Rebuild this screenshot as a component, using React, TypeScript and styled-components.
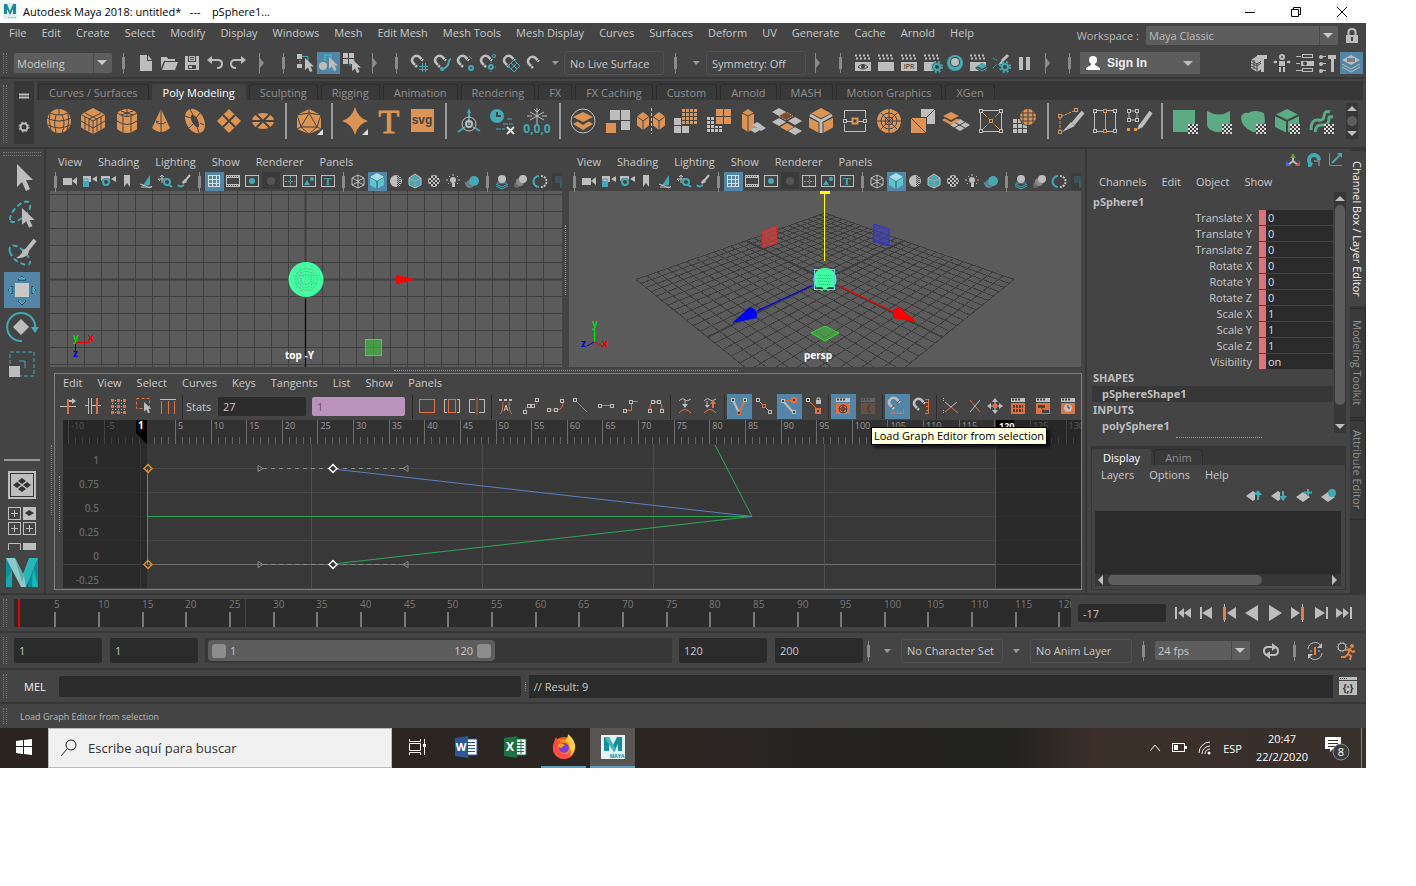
import React, { ReactNode } from "react";
import styled, { createGlobalStyle, css } from "styled-components";

const G = "#bdbdbd";
const T = "#43a9b5";
const O = "#dc9455";
const E = "#e0703f";
const N = "#5cab85";
const D = "#444444";
const SEL = "#5285a6";

const Global = createGlobalStyle`
  *, *::before, *::after { box-sizing: border-box; }
  body { margin: 0; background: #fff; font-family: "Open Sans", "Noto Sans", sans-serif; font-size: 11px; color: #c8c8c8; }
  button, input, select { font: inherit; color: inherit; margin: 0; padding: 0; border: 0; background: none; border-radius: 0; }
  button { cursor: default; }
`;

/* ---------- drawing helpers, all icons are drawn around (0,0) ---------- */
const s = (d: string, c: string = G, w: number = 1, dash?: string) => (
  <path d={d} fill="none" stroke={c} strokeWidth={w} strokeDasharray={dash} />
);
const f = (d: string, c: string = G) => <path d={d} fill={c} />;
const r = (x: number, y: number, w: number, h: number, c: string = G) => (
  <rect x={x} y={y} width={w} height={h} fill={c} />
);
const o = (x: number, y: number, rad: number, c: string = G) => <circle cx={x} cy={y} r={rad} fill={c} />;
const ring = (x: number, y: number, rad: number, c: string = G, w: number = 1, dash?: string) => (
  <circle cx={x} cy={y} r={rad} fill="none" stroke={c} strokeWidth={w} strokeDasharray={dash} />
);
const sq = (x: number, y: number, c: string = G) => (
  <rect x={x - 1.5} y={y - 1.5} width={3} height={3} fill={D} stroke={c} />
);
const at = (x: number, y: number, n: ReactNode, k: number = 1) => <g transform={`translate(${x} ${y}) scale(${k})`}>{n}</g>;

const magnet = s("M-2 4L-6 0A4.5 4.5 0 0 1 0-6.500L4-2.500", G, 2.5);
const magnetCut = <>{magnet}{s("M-5 3.500L-2 .5M1-2L4-5", D, 1)}</>;
const cursor = f("M0 0V12L3 9.500L5 14L7.500 13L5.500 8.500H9Z");
const clap = <>{r(-8, -1, 16, 9)}{s("M-8-7.500H8M-7-4.500H8", G, 2, "2 2")}</>;
const gear = (x: number, y: number, c: string) => <>{ring(x, y, 3, c, 2)}{ring(x, y, 5, c, 2, "2 2")}</>;
const checker = (
  <>{r(3, 3, 9, 9, "#444")}{[0, 1, 2, 3, 4].map((i) => [0, 1, 2, 3, 4].map((j) => (i + j) % 2 === 0 && <rect key={`${i}${j}`} x={3 + i * 2} y={3 + j * 2} width={2} height={2} fill="#d8d8d8" />))}</>
);
const grid = (x: number, y: number, n: number, p: number, c: string) =>
  Array.from({ length: n * n }, (_, i) => (
    <rect key={i} x={x + (i % n) * p} y={y + Math.floor(i / n) * p} width={p - 1} height={p - 1} fill={c} />
  ));
const tile = (x: number, y: number, c: string, w: number = 7, h: number = 4) => f(`M${x - w} ${y}L${x} ${y - h}L${x + w} ${y}L${x} ${y + h}Z`, c);
const cube = (w: number, h: number, c: string, line: string = D) => (
  <>
    {f(`M0 ${-h}L${w} ${-h / 2}V${h / 2}L0 ${h}L${-w} ${h / 2}V${-h / 2}Z`, c)}
    {s(`M${-w} ${-h / 2}L0 0L${w} ${-h / 2}M0 0V${h}`, line, 1)}
  </>
);
const wireCube = <>{s("M0-6L6-3V4L0 7L-6 4V-3ZM-6-3L0 0L6-3M0 0V7M0-6V1L-6 4M0 1L6 4", G)}</>;
const frame = <rect x={-6.5} y={-5.500} width={13} height={11} fill="none" stroke={G} />;
const windowIcon = (n: ReactNode) => <>{r(-7, -8, 14, 4)}{s("M-6-6.500H2", D, 2, "2 1")}{r(-7, -3, 14, 11, E)}{n}</>;

const I: Record<string, ReactNode> = {
  new: <>{f("M-6-8H1V-2H6V8H-6Z")}{f("M2-8L6-3H2Z")}</>,
  open: <>{f("M-8-6H-2L-1-4H6V-2H-5L-8 5Z")}{f("M-4-1H9L6 7H-7Z")}</>,
  save: <>{f("M-7-7H7V7H-7Z")}{r(-4, -7, 8, 6, D)}{r(-3, -7, 6, 5)}{s("M-2-5.500H2M-2-3.500H2", D)}{r(-4, 2, 8, 4, D)}{r(-3, 3, 3, 2)}</>,
  undo: <>{s("M-5-3H3Q7-3 7 1Q7 5 2 5", G, 2)}{f("M-8-3L-3-7V1Z")}</>,
  redo: <>{s("M5-3H-3Q-7-3-7 1Q-7 5-2 5", G, 2)}{f("M8-3L3-7V1Z")}</>,
  selHier: <>{r(-8, -9, 5, 5)}{r(-8, 1, 5, 4)}{s("M-3-6.500H3V-1", T)}{s("M-5-3V1", G, 1, "1 1")}{at(0, -5, cursor)}</>,
  selObj: <>{o(-5, 3, 4)}{s("M-3-2V-8H3V2", T, 2)}{at(1, -6, cursor)}</>,
  selComp: <>{grid(-8, -10, 2, 6, G)}{s("M-1 0V3M4-3H1", T)}{at(1, -4, cursor)}</>,
  magGrid: <>{magnetCut}{s("M0 3.500H9M0 6.500H9M3.500 0V9M6.500 0V9", T, 1)}</>,
  magCurve: <>{magnetCut}{s("M0 6Q6 5 7-2Q8-4 9-4", T, 2)}{o(0, 6, 2, T)}</>,
  magPoint: <>{magnetCut}{ring(6, 5, 2, T, 2)}{s("M4-7L7-4", T)}</>,
  magCenter: <>{magnetCut}{ring(6, -7, 1.500, T)}{ring(3, 4, 2, T, 2)}{s("M3-1V0M3 8V9M-2 4H-1M7 4H8", T, 1)}</>,
  magPlane: <>{magnetCut}{s("M-3 3L3-3L9 3L3 9ZM0 0L6 6M6 0L0 6", T, 1)}</>,
  mag: <>{at(1, 1, magnetCut)}</>,
  down: f("M-3-2H4L0 2Z", "#9a9a9a"),
  rEye: <>{clap}{s("M-5 4Q0-1 5 4Q0 8-5 4", D)}{o(0, 3.500, 2, D)}</>,
  rClap: clap,
  rIpr: <>{clap}<text x={0} y={6} fontSize={7} textAnchor="middle" fill="#222">IPR</text></>,
  rGear: <>{clap}{o(5, 4, 5, D)}{gear(5, 4, T)}</>,
  rBall: <>{o(0, 0, 8, T)}{o(0, -1, 5, D)}{o(0, -1, 4)}</>,
  rLayer: <>{clap}{tile(4, 5, D, 7, 5)}{tile(4, 3, T, 5, 3)}{s("M-1 5L4 8L9 5", T, 1)}</>,
  rPaint: <>{s("M-8-5L-3-2M-8 5L-4 1", T, 1, "2 1")}{s("M7-8L1-2", G, 3)}{f("M1-3L3 0L-3 2Z")}{gear(4, 4, T)}</>,
  pause: <>{r(-5, -6, 4, 13)}{r(2, -6, 4, 13)}</>,
  pModel: <>{at(-2, 1, cube(6, 8, G))}{s("M-8 0L-2 3L2 0M-8 3L-2 6M-5-3V6", D)}{f("M-2-8H8V-4H5V9H2V-4H-2Z")}</>,
  pHuman: <>{ring(0, -6, 2, G, 2)}{r(-3, -2, 6, 5)}{s("M-8-1H-5M5-1H8M-2 4V9M2 4V9", G, 2)}{ring(-7, -1, 1)}{ring(7, -1, 1)}</>,
  pAttr: <>{s("M-9-6.500H-4M-9 .5H-5M-9 7.500H-2")}<rect x={-2.500} y={-8.500} width={10} height={3} fill="none" stroke={G} />{r(-4, -2, 13, 5)}{o(0, .5, 2, D)}<rect x={-2.500} y={5.500} width={10} height={3} fill="none" stroke={G} /></>,
  pTool: <>{s("M-8-6.500H-2M-8 .5H-2M-8 7.500H-2", G, 1)}{o(-7, -6, 2)}{o(-7, 1, 2)}{o(-7, 8, 2)}{f("M0-8H8V-4H6V9H3V-4H0Z")}</>,
  pLayers: <>{tile(0, -3, G, 9, 5)}{s("M-9 1L0 6L9 1M-9 4L0 9L9 4", G, 1)}{s("M-4-4H4M-4-2H4", "#345")}</>,
  /* shelf */
  sphere: <>{o(0, 0, 12, O)}{s("M-12-3Q0 3 12-3M-11 4Q0 10 11 4M-9-8Q0-4 9-8M0-12V-6M-3-6Q-6 2-3 12M3-6Q7 2 3 12M-9-8Q-11 0-8 9M9-8Q11 0 8 9", D)}</>,
  cube: <>{cube(12, 13, O)}{s("M-12 0L0 7L12 0M-8-8L4-2V10M8-8L-4-2V10M-8-4V8M8-4V8", D)}</>,
  cylinder: <>{f("M-10-8Q0-16 10-8V8Q0 16-10 8Z", O)}{s("M-10-8Q0-1 10-8M-10 0Q0 7 10 0M-4-5V11M4-5V11M0-12V-5M-6-10L6-6M6-10L-6-6", D)}</>,
  cone: <>{f("M0-12L9 7Q0 15-9 7Z", O)}{s("M0-12V12M-5 1Q0 5 5 1M-5 0L-2 1", D)}</>,
  torus: <><ellipse cx={0} cy={0} rx={6} ry={10} fill="none" stroke={O} strokeWidth={6} transform="rotate(-28)" />{s("M-10-5L-4-3M-5-12L-2-6M5-8L1-3M9 4L5 2M4 12L2 6M-6 7L-1 2", D)}</>,
  plane: <>{f("M0-12L12 0L0 12L-12 0Z", O)}{s("M-6-6L6 6M6-6L-6 6", D, 2)}</>,
  disc: <><ellipse cx={0} cy={0} rx={11} ry={8} fill={O} />{s("M-11 0H11M-7-7L7 7M7-7L-7 7", D, 2)}</>,
  platonic: <>{f("M0-12L12-6V8L0 13L-12 8V-6Z", O)}{s("M0-8L-8 6H8ZM0-12V-8M-12-6L0-8L12-6M-12-6L-8 6L-12 8M12-6L8 6L12 8M-8 6L0 13L8 6", D)}{f("M14 8V14H8Z", "#ddd")}</>,
  star: <>{f("M0-14Q3-3 13 0Q3 3 0 14Q-3 3-13 0Q-3-3 0-14Z", O)}{f("M13 8V14H7Z", "#ddd")}</>,
  type: <text x={0} y={12} fontSize={34} fontFamily="Liberation Serif, serif" textAnchor="middle" fill={O} stroke={O}>T</text>,
  svg: <>{r(-12, -12, 23, 23, O)}<text x={-1} y={3} fontSize={12} fontFamily="Liberation Sans, sans-serif" fontWeight={700} textAnchor="middle" fill={D}>svg</text></>,
  center: <>{s("M0-11V4M-11 11L-4 6M4 6L11 10", T, 2)}{ring(0, 3, 7)}{ring(0, 3, 3, G, 2)}{f("M-2-8L0-13L2-8Z", T)}</>,
  history: <>{o(-6, -5, 7, T)}{s("M-6-9V-5H-2", D, 2)}{s("M4-2H10M0 3H10M-7 8H2", T, 1, "5 1")}{s("M4 6L11 13M11 6L4 13", "#ddd", 2)}</>,
  freeze: <>{s("M0-13V3M-7-9L7-1M7-9L-7-1M-3-12L0-9L3-12M-10-5H-5M5-5H10", G, 1)}<text x={0} y={12} fontSize={12} fontWeight={700} textAnchor="middle" fill={T}>0,0,0</text></>,
  combine: <>{ring(0, 0, 12)}{tile(0, 3, O, 10, 6)}{tile(0, -3, D, 11, 7)}{tile(0, -4, O, 10, 5)}</>,
  separate: <>{r(-7, -11, 10, 10)}{r(4, -11, 9, 10)}{r(4, 0, 9, 9)}{r(-11, 2, 10, 10, O)}</>,
  mirror: <>{at(-8, 0, cube(6, 9, O))}{at(8, 0, cube(6, 9, O))}{s("M.5-13V13", G, 1, "3 2")}</>,
  smooth: <>{grid(-11, -3, 2, 8, G)}{r(-4, -12, 17, 17, D)}{grid(-3, -12, 4, 4, O)}</>,
  reduce: <>{grid(-12, -4, 4, 4, G)}{r(-4, -12, 17, 17, D)}{grid(-3, -12, 2, 8, O)}</>,
  extrude: <>{f("M-11-8L-5-12L1-8V7L-5 11L-11 7Z", O)}{s("M-11-8L-5-5L1-8M-5-5V11", D)}{tile(4, 4, G, 5, 3)}{tile(8, 7, G, 5, 3)}{tile(2, 9, G, 5, 3)}</>,
  bridge: <>{tile(-8, -9, G)}{tile(-1, -5, "#6b4f38")}{s("M-8-5L-1-9L6-5L-1-1Z", O, 1, "2 1")}{tile(8, 0, G)}{tile(-8, 1, G)}{tile(0, 6, O)}{tile(8, 10, G)}</>,
  bevel: <>{cube(12, 13, O, "#444")}{s("M-12-6L0 0L12-6M0 0V13", D, 5)}{s("M-11-6L0 0L11-6M0 0V12", G, 3)}</>,
  connect: <>{s("M-10.500-3V-10.500H10.500V-3M-10.500 3V10.500H10.500V3M-10 .5H10", G)}{sq(-10, 0)}{sq(10, 0)}<rect x={-2.500} y={-2.500} width={5} height={5} fill={D} stroke={O} strokeWidth={2} /></>,
  wheel: <>{o(0, 0, 12, O)}{ring(0, 0, 8, D)}{ring(0, 0, 4, D)}{s("M0-12V12M-12 0H12M-8-8L8 8M8-8L-8 8", D)}</>,
  fill: <>{f("M-2-12H12V3H-2Z")}{r(-12, -4, 16, 16, D)}{r(-12, -3, 15, 15, O)}{s("M-12-3L3 12M3-3L12-12", D)}</>,
  merge: <>{tile(3, 4, G, 10, 6)}{s("M-3 1L8 7M8 1L-3 7", D)}{tile(-6, -1, O, 9, 5)}{tile(-6, -4, D, 9, 5)}{tile(-6, -5, O, 8, 4)}</>,
  target: <>{s("M-10.500-10.500H10.500V10.500H-10.500Z")}{s("M-9-9L9 9M9-9L-9 9", O, 1, "7 2")}{sq(-10, -10)}{sq(10, -10)}{sq(-10, 10)}{sq(10, 10)}{sq(0, 0, O)}</>,
  remesh: <>{grid(-12, -2, 3, 5, G)}{o(3, -4, 9, D)}{o(3, -4, 8, O)}{s("M3-12V4M-5-4H11M-2-11V3M8-11V3M-4-8H10M-4 0H10", D)}</>,
  cut: <>{s("M-11 11V-4L5-11", O, 1, "3 1")}{sq(-11, 11, O)}{sq(-11, -5, O)}{sq(5, -11, O)}{s("M12-9L2 3", G, 4)}{f("M0 1L4 5L-9 11Z")}</>,
  loop: <>{s("M-10.500-10.500H10.500M-10.500-10V10.500H10.500V-10", G, 1)}{s("M.5-10V10", O)}{sq(-10, -10)}{sq(10, -10)}{sq(-10, 10)}{sq(10, 10)}{sq(0, -10, O)}{sq(0, 10, O)}</>,
  quad: <>{s("M-10-10H-2V-1H-10Z")}{sq(-10, -10)}{sq(-2, -10)}{sq(-10, -1)}{sq(-2, -1)}{r(-12, 7, 3, 3, O)}{r(-5, 7, 3, 3, O)}{s("M12-9L2 5", G, 4)}{f("M0 3L4 6L-2 9Z")}</>,
  uv1: <>{r(-12, -11, 22, 22, N)}{checker}</>,
  uv2: <>{f("M-12-10Q0-3 11-10V8Q0 14-8 9Q-12 7-12 3Z", N)}{checker}</>,
  uv3: <>{f("M-12-4Q-10-9-5-8Q2-12 11-8L12 0Q10 12 0 11Q-12 6-12-4Z", N)}{checker}</>,
  uv4: <>{at(0, 0, cube(12, 12, N))}{s("M-12-6L0 0L12-6M0 0V12", D, 2)}{checker}</>,
  uv5: <>{s("M-10 9Q-10-2-3-1Q3 0 3-5Q4-11 9-9M-6 11Q-5 3 1 4Q8 5 8-3Q8-5 12-4", N, 3)}{checker}</>,
  /* viewport */
  vCam: <>{r(-7, -3, 9, 7)}{f("M2 0L7-4V4Z")}</>,
  vLock: <>{r(-6, -5, 8, 6)}{f("M3-2L8-5V1Z")}{r(-6, 0, 6, 6, T)}{s("M-5 0V-2H-1V0", T)}</>,
  vCamGear: <>{r(-7, -5, 9, 5)}{f("M3-2L8-5V1Z")}{o(-2, 2, 5, D)}{ring(-2, 1, 3, T, 2)}</>,
  vMark: f("M-3-6H3V6L0 2L-3 6Z"),
  vPlane: <>{f("M-2 3L4-6V4L-2 5Z", T)}{s("M-6 3L4 7L6 5M-5 6H6M-4 4H-2")}</>,
  vPan: <>{s("M-7-2H1M-3-6V2M-5-4L-3-6L-1-4M-5 0L-7-2")}{ring(2, 1, 3, T, 2)}{s("M4 4L7 6", T, 2)}</>,
  vPaint: <>{s("M6-6L1 0", G, 2)}{f("M1-2L3 1L-1 3L-2 1Z")}{s("M-6 4Q-4 7 0 4", T, 2)}</>,
  vGrid: <><rect x={-5.500} y={-5.500} width={11} height={11} fill="none" stroke="#ddd" />{s("M-1.500-5V5M2.500-5V5M-5-1.500H5M-5 2.500H5", "#ddd")}</>,
  vFilm: <>{r(-7, -6, 14, 12)}{r(-6, -3, 12, 6, D)}{s("M-6-4.500H6M-6 4.500H6", D, 1, "1 1")}</>,
  vRes: <>{frame}{o(0, 0, 3, T)}</>,
  vMask: <>{r(-9, -9, 18, 17, "#3b3b3b")}{o(0, 0, 4, "#555")}</>,
  vField: <>{frame}{s("M-5 .5H5M.5-5V5", T, 1, "2 1")}</>,
  vSafe: <>{frame}{o(3, -2, 2, T)}{f("M-5 4L-2-1L1 4Z", T)}</>,
  vT: <>{frame}<text x={0} y={4} fontSize={11} fontFamily="Liberation Serif, serif" fontWeight={700} textAnchor="middle" fill={T}>T</text></>,
  vWire: wireCube,
  vShade: <>{cube(7, 8, "#5fc3cf", "#2a5566")}{f("M-7-4L0-8L7-4L0 0Z", "#a5dfe6")}</>,
  vHalf: <>{o(0, 0, 6, G)}{s("M1.500-5V6M3.500-5V5", D, 1, "1 1")}{s("M2.500-4V6M4.500-3V4", D, 1, "1 1")}</>,
  vWireS: <>{cube(6, 7, T)}{s("M0-7L6-3V4L0 7L-6 4V-3ZM-6-3L0 0L6-3M0 0V7", G)}</>,
  vCheck: <>{o(0, 0, 6, G)}{s("M-5-4H5M-5 0H6M-5 4H5", D, 2, "2 2")}{s("M-3-2H6M-3 2H6", D, 2, "2 2")}</>,
  vLight: <>{o(0, -1, 3)}{r(-1, 2, 3, 4)}{s("M-7-1H-5M5-1H7M-4-5L-3-4M5-5L4-4M0-7V-5M-5 3L-4 2M5 3L4 2", G)}</>,
  vShadow: <>{o(-2, 3, 4, "#777")}{o(2, 0, 5, T)}{s("M-7 1Q-6 6-2 6", T)}</>,
  vAo: <>{s("M-6 3L0 6L6 3M-6 5L0 8L6 5M-5 2H5", T, 1)}{o(0, -2, 4)}</>,
  vBlur: <>{o(-4, 4, 3, "#666")}{o(-1, 1, 4, "#888")}{o(2, -2, 4)}</>,
  vAA: <>{s("M-1-5A5 5 0 0 0-1 6", T, 2)}{s("M1-5A5 5 0 0 1 1 6", G, 2, "2 1")}</>,
  vDim: <>{r(-7, -8, 18, 17, "#3d3d3d")}{r(-4, -5, 7, 7, "#41535a")}{r(1, 0, 9, 7, "#3d6068")}</>,
  /* graph editor */
  g1: <>{s("M-8 .5H8", G)}{s("M0-7V8", E, 2)}{f("M1-6H4V-8L8-5L4-2V-4H1Z")}</>,
  g2: <>{s("M-8-.5H8", G)}{s("M-3-8V8", D, 4)}{s("M-4.500-8V8M-1.500-8V8", G, 1)}{s("M4-8V8", E, 2)}</>,
  g3: <>{s("M-6-2.500H7M-6 3.500H7M-2.500-6V7M3.500-6V7", G, 1, "1 2")}{[-6, 0, 6].map((x) => [-6, 0, 6].map((y) => <rect key={`${x}${y}`} x={x - 1} y={y - 1} width={3} height={3} fill={E} />))}</>,
  g4: <><rect x={-6.500} y={-7.500} width={13} height={10} fill="none" stroke={E} strokeDasharray="3 2" />{at(1, -4, cursor, 0.8)}</>,
  g5: <>{s("M-8-6.500H8")}{s("M-6.500-5V8M.5-5V8M6.500-5V8", E, 1)}</>,
  g6: <rect x={-7.500} y={-6.500} width={15} height={13} fill="none" stroke={E} />,
  g7: <><rect x={-3.500} y={-6.500} width={7} height={13} fill="none" stroke={E} />{s("M-5-6.500H-7.500V6.500H-5M5-6.500H7.500V6.500H5")}</>,
  g8: <>{s("M-2-6.500H-7.500V6.500H-2M2-6.500H7.500V6.500H2")}{s("M0-9V9", "#8a5340", 2)}</>,
  g9: <>{s("M-6 8Q-3 6-3-4M6 8Q3 6 3-4", E)}{s("M-7-6H7", G, 2, "3 2")}{s("M-2 5L0-1L2 5M-1 3H1")}</>,
  g10: <>{s("M-6 6Q-6 0-2 0H2Q6 0 6-6", E, 1, "2 1")}{sq(-6, 6)}{sq(-2, 0)}{sq(2, 0)}{sq(6, -6)}</>,
  g11: <>{s("M-7 4H1Q7 4 7-5", E)}{sq(-7, 4)}{sq(0, 4)}{sq(6, -5)}</>,
  g12: <>{s("M-5-5L6 6", E)}{sq(-6, -6)}</>,
  g13: <>{s("M-6-.5H6", E)}{sq(-6, 0)}{sq(6, 0)}</>,
  g14: <>{s("M-6 4.500H.5V-4.500H7", E)}{sq(-6, 5)}{sq(0, -4)}</>,
  g15: <>{s("M-6 5Q-6-4-3-4M6 5Q6-4 3-4", E)}{s("M-3-4H3")}{sq(-6, 5)}{sq(-3, -4)}{sq(3, -4)}{sq(6, 5)}</>,
  g16: <>{s("M-6-5Q-2-9 0-6Q2-4 6-7")}{s("M-6 7Q0 0 6 7", E)}{f("M-3-2H3L0 2Z")}{s("M0-6V0")}</>,
  g17: <>{s("M-6-5Q-2-9 0-6Q2-4 6-7")}{s("M-6 7Q0 0 6 7", E)}{f("M-5-1H0L-3 2Z")}{s("M-3-5V0")}{f("M0-2H6L3-6Z", E)}{s("M3-3V2", E, 2)}</>,
  g18: <>{s("M-6-6L0 7", G, 2)}{s("M6-6L0 7", E, 2)}{sq(-6, -6)}{sq(6, -6)}{sq(0, 7, E)}</>,
  g19: <>{s("M-6-6L6 6", G)}{sq(-6, -6)}{sq(6, 6)}{sq(0, 0, E)}</>,
  g20: <>{s("M-6-5.500H4", E)}{s("M-6-5L4 6", G, 2)}{sq(-6, -5)}{sq(5, 6)}<rect x={3} y={-8} width={4} height={4} fill={D} stroke={E} strokeWidth={2} /></>,
  g21: <>{s("M-6-6L2 2", E)}{sq(-6, -6)}<rect x={2} y={3} width={4} height={4} fill={D} stroke={E} strokeWidth={2} />{r(2, -6, 5, 4)}{s("M3-6V-8H6V-6")}</>,
  g22: <>{windowIcon(<>{ring(0, 3, 4, D)}{ring(0, 3, 2, D)}{s("M0-1V7M-4 3H4", D)}</>)}</>,
  g23: <g opacity={0.25}>{windowIcon(s("M2-1Q-2 3 2 7", D, 2))}</g>,
  g24: <>{at(-1, -1, magnetCut)}{s("M-5 7.500H7M-5 8V4M-2.500 8V5M.5 8V5M3.500 8V5M6.500 8V3", E)}</>,
  g25: <>{at(-1, 0, magnetCut)}{s("M6.500-7V8M3-6.500H7M4-3.500H7M4 .5H7M4 4.500H7M3 7.500H7", E)}</>,
  g26: <>{s("M-6-4L0 1L6-4")}{s("M-6 6L0 1L7 7", E)}{s("M-7.500 4V8M-7.500-8V-4", G, 1, "1 1")}</>,
  g27: <>{s("M-4-6L6 6", E)}{s("M6-6L-4 6")}</>,
  g28: <>{f("M0-8L3-4H-3ZM0 8L3 4H-3ZM-8 0L-4-3V3ZM8 0L4-3V3Z")}{r(-2, -2, 4, 4, E)}{s("M0-4V-2M0 2V4M-4 0H-2M2 0H4")}</>,
  g29: <>{windowIcon(s("M-5 .5H5M-5 4.500H5", D, 3, "2 1"))}</>,
  g30: <>{windowIcon(<>{r(-5, -1, 7, 3, D)}{r(-1, 4, 7, 3, D)}{s("M-2 2L2 5", D)}</>)}</>,
  g31: <>{windowIcon(<>{o(0, 2, 4, G)}{s("M0-1V2H2", D)}</>)}</>,
  /* toolbox */
  tSel: <>{f("M-5-15V8L0 3L4 12L8 10L4 1H11Z")}</>,
  tLasso: <>{s("M-12 4Q-12-4-2-12Q6-17 8-12Q10-6 0 2Q-10 9-12 4Z", T, 2, "5 3")}{at(0, -8, cursor, 1.400)}</>,
  tPaint: <>{s("M-12-1Q-14-9-6-7Q2-4 7 5Q10 12 5 12Q-8 10-12-1Z", T, 2, "5 3")}{s("M13-13L5-3", G, 4)}{f("M5-5L7-1Q4 6-6 5Q0 2 1-3Z")}</>,
  tMove: <>{r(-7, -7, 14, 14, "#c8c8c8")}{s("M-4-10L0-14L4-10ZM-4 11L0 15L4 11ZM-10-4L-14 0L-10 4ZM10-4L14 0L10 4Z", "#163f49", 1)}{s("M-3-11L0-13L3-11ZM-3 11L0 14L3 11ZM-11-3L-13 0L-11 3ZM11-3L13 0L11 3Z", "#51c0cc", 1)}</>,
  tRot: <>{s("M0 14A14 14 0 1 1 13 2", T, 2)}{f("M9 0H17L13 6Z", T)}{f("M-1-8L7 0L-1 8L-9 0Z")}</>,
  tScale: <><rect x={-12} y={-12} width={24} height={24} fill="none" stroke={T} strokeDasharray="4 2" />{r(-13, 2, 11, 11)}{s("M-3-3H3V4", T)}</>,
  /* channel box */
  cTri: <>{s("M0 1L-5 5M0 1L5 5M0 1V-3", G, 2)}{f("M-3-2L0-7L3-2Z", "#5aa02c")}{f("M-7 6V1L-2 6Z", "#3a6ee0")}{f("M7 6V1L2 6Z", "#e04848")}</>,
  cSpeed: <>{ring(0, 0, 5, T, 4)}{f("M0 0H8V8H-3Z", D)}{s("M0 1H5V6", "#777", 2)}{r(-6, 4, 3, 3, T)}</>,
  cGraph: <>{s("M-5.500-7V5.500H7", "#888", 1)}{s("M-3 3L5-5", T, 2)}{f("M2-7H7V-2Z", T)}</>,
  lUp: <>{tile(-1, 0, G, 7, 5)}{r(1, -1, 4, 6, D)}{s("M4 4V-1", T, 2)}{f("M0-1L4-6L8-1Z", T)}</>,
  lDown: <>{tile(-1, 0, G, 7, 5)}{r(1, -3, 4, 6, D)}{s("M4-5V2", T, 2)}{f("M0 0L4 5L8 0Z", T)}</>,
  lNew: <>{tile(-1, 1, G, 7, 5)}{s("M4-7V0M0-3.500H8", T, 2)}</>,
  lAssign: <>{tile(-1, 1, G, 7, 5)}{o(3, -3, 4, T)}</>,
  /* transport */
  start: <>{r(-8, -6, 2, 12)}{f("M-5 0L1-5V5ZM1 0L8-5V5Z")}</>,
  stepB: <>{r(-6, -6, 2, 12)}{f("M-4 0L6-6V6Z")}</>,
  keyB: <>{r(-5, -9, 1, 18)}{r(-6, -6, 3, 13, "#dd8144")}{f("M-2 0L7-6V6Z")}</>,
  playB: f("M-7 0L6-8V8Z"),
  play: f("M7 0L-6-8V8Z"),
  keyF: <>{r(4, -9, 1, 18)}{r(3, -6, 3, 13, "#dd8144")}{f("M2 0L-7-6V6Z")}</>,
  stepF: <>{r(5, -6, 2, 12)}{f("M4 0L-6-6V6Z")}</>,
  end: <>{r(6, -6, 2, 12)}{f("M5 0L-1-5V5ZM-1 0L-8-5V5Z")}</>,
  repeat: <>{s("M-4-4H3Q7-4 7 0Q7 4 3 4M4 4H-3Q-7 4-7 0Q-7-4-3-4", G, 2)}{f("M1-8V0L6-4Z")}{f("M-1 0V8L-6 4Z")}</>,
  auto: <>{s("M-7-2A7 7 0 0 1 6-5M7 2A7 7 0 0 1-6 5", G, 1)}{f("M7-8V-3H2Z")}{f("M-7 8V3H-2Z")}{r(-1, -4, 2, 8, "#dd8144")}{s("M-5 0H-3M3 0H5")}</>,
  run: <>{ring(-4, -4, 4, G, 1)}{ring(-4, -4, 5, G, 1, "1 2")}{o(6, -5, 2, "#dd8144")}{s("M-1-1L4-2L2 3L5 5L4 9M2 3L-1 6H-5M4-1L7 1L9 0", "#dd8144", 2)}</>,
  script: <>{r(-9, -9, 18, 18)}{r(-9, -6, 18, 1, D)}{s("M-8-7.500H0", D, 1, "1 1")}<text x={0} y={6} fontSize={10} fontWeight={700} textAnchor="middle" fill="#333">{"{;}"}</text></>,
  panelMenu: <>{s("M-5-1.500H5M-5 1.500H5", G, 2)}</>,
  gear: <>{ring(0, 0, 3.5, G, 2)}{ring(0, 0, 5, G, 1, "2 2")}</>,
};

/* The drawing keeps the parity of its button, so that its centre falls on a whole pixel. */
const Svg = styled.svg<{ $w: number; $h: number }>`
  display: block;
  flex: none;
  width: ${(p) => p.$w}px;
  height: ${(p) => p.$h}px;
  overflow: visible;
`;
const Icon = ({ n, w, h, size = 16 }: { n: string; w: number; h: number; size?: number }) => {
  const sw = size + (w % 2);
  const sh = size + (h % 2);
  return <Svg $w={sw} $h={sh} viewBox={`${-size / 2} ${-size / 2} ${sw} ${sh}`} aria-hidden="true">{I[n]}</Svg>;
};

/* ---------- shared parts ---------- */
const Page = styled.div`
  padding-right: 50px;
`;
const Win = styled.div`
  background: #444;
  overflow: hidden;
`;
const Bar = styled.div<{ $h: number }>`
  display: flex;
  align-items: center;
  height: ${(p) => p.$h}px;
`;
const RuledBar = styled(Bar)`
  box-sizing: content-box;
  border-bottom: 2px solid #373737;
`;
const Grip = styled.div`
  flex: none;
  align-self: stretch;
  width: 4px;
  margin: 4px 7px 4px 3px;
  border: 1px dotted #7a7a7a;
  border-width: 0 1px;
`;
const ToolBtn = styled.button<{ $w: number; $h: number; $on?: boolean }>`
  flex: none;
  display: flex;
  align-items: center;
  justify-content: center;
  width: ${(p) => p.$w}px;
  height: ${(p) => p.$h}px;
  background: ${(p) => (p.$on ? SEL : "transparent")};
`;
const SepBox = styled.span<{ $w: number }>`
  flex: none;
  display: flex;
  align-items: center;
  justify-content: center;
  width: ${(p) => p.$w}px;
`;
const Sep = ({ w, kind = "knob" }: { w: number; kind?: "knob" | "arrow" | "line" | "tall" }) => (
  <SepBox $w={w}>
    {kind === "tall" ? (
      <svg width={2} height={36}><rect width={2} height={36} fill="#9a9a9a" /></svg>
    ) : kind === "line" ? (
      <svg width={2} height={24}><rect width={1} height={24} fill="#2b2b2b" /></svg>
    ) : (
      <svg width={5} height={20}>
        <rect x={kind === "arrow" ? 0 : 2} width={1} height={20} fill="#8a8a8a" />
        {kind === "arrow" ? <path d="M1 5L5 10L1 15Z" fill="#8a8a8a" /> : <rect x={1} y={4} width={3} height={12} fill="#8a8a8a" />}
      </svg>
    )}
  </SepBox>
);
const Tools = ({ names, w, h, on = [], size = 16 }: { names: string[]; w: number; h: number; on?: string[]; size?: number }) => (
  <>
    {names.map((n) => (
      <ToolBtn key={n} $w={w} $h={h} $on={on.includes(n)} aria-label={n}>
        <Icon n={n} w={w} h={h} size={size} />
      </ToolBtn>
    ))}
  </>
);
const ListArrow = ({ w, label }: { w: number; label: string }) => (
  <ToolBtn $w={w} $h={22} aria-label={label}><Icon n="down" w={w} h={22} /></ToolBtn>
);
const MenuNav = styled.nav<{ $gap: number; $pl: number; $h: number }>`
  display: flex;
  align-items: center;
  gap: ${(p) => p.$gap}px;
  height: ${(p) => p.$h}px;
  padding-left: ${(p) => p.$pl}px;
`;
const MenuBtn = styled.button`
  white-space: nowrap;
  line-height: 20px;
`;
const Menu = ({ items, h = 20, gap = 15, pl = 8 }: { items: string; h?: number; gap?: number; pl?: number }) => (
  <MenuNav $gap={gap} $pl={pl} $h={h}>
    {items.split("|").map((m) => <MenuBtn key={m}>{m}</MenuBtn>)}
  </MenuNav>
);
const SelectWrap = styled.label<{ $w: number; $h: number }>`
  position: relative;
  flex: none;
  display: block;
  width: ${(p) => p.$w}px;
  height: ${(p) => p.$h}px;
  background: #5d5d5d;
  border-radius: 2px;
  &::before { content: ""; position: absolute; right: 18px; top: 0; bottom: 0; width: 1px; background: #494949; }
  &::after { content: ""; position: absolute; right: 5px; top: 7px; border: 5px solid transparent; border-top-color: #c8c8c8; border-bottom: 0; }
`;
const Select = styled.select`
  width: 100%;
  height: 100%;
  padding-left: 3px;
  appearance: none;
  outline: 0;
`;
const Drop = ({ w, h, value, label }: { w: number; h: number; value: string; label: string }) => (
  <SelectWrap $w={w} $h={h}>
    <Select aria-label={label} defaultValue={value}><option>{value}</option></Select>
  </SelectWrap>
);
const Outline = styled.button<{ $w: number }>`
  flex: none;
  width: ${(p) => p.$w}px;
  height: 24px;
  padding-left: 5px;
  text-align: left;
  border: 1px solid #525252;
  border-radius: 3px;
`;
const Field = styled.input<{ $w?: number; $h: number; $bg?: string; $fg?: string }>`
  flex: none;
  width: ${(p) => (p.$w ? `${p.$w}px` : "auto")};
  min-width: 0;
  height: ${(p) => p.$h}px;
  padding-left: 5px;
  border-radius: 2px;
  background: ${(p) => p.$bg ?? "#2b2b2b"};
  color: ${(p) => p.$fg ?? "#c8c8c8"};
`;

/* ---------- title bar ---------- */
const TitleBar = styled.header`
  display: flex;
  align-items: center;
  height: 23px;
  background: #fff;
  color: #000;
`;
const Title = styled.h1`
  flex: 1;
  margin: 0;
  padding-left: 5px;
  font-size: 11px;
  font-weight: 400;
  white-space: pre;
`;

const TopBar = styled.div`
  display: flex;
  align-items: flex-start;
  height: 26px;
`;
const Workspace = styled.div`
  display: flex;
  align-items: center;
  gap: 7px;
  margin: 3px 7px 0 auto;
  color: #bbb;
`;
const SignIn = styled.button`
  flex: none;
  display: flex;
  align-items: center;
  gap: 6px;
  width: 120px;
  height: 22px;
  padding: 0 4px 0 5px;
  background: #5d5d5d;
  color: #eee;
  font: 700 12px "Liberation Sans", sans-serif;
`;
const Push = styled.span`
  display: flex;
  margin-left: auto;
  padding-right: 3px;
`;

/* ---------- shelf ---------- */
const Shelf = styled.div`
  display: flex;
  height: 70px;
  padding: 2px 3px 0 0;
  border-bottom: 2px solid #373737;
`;
const ShelfSide = styled.div`
  display: flex;
  flex-direction: column;
  align-items: center;
  justify-content: space-between;
  width: 20px;
  height: 63px;
  margin-right: 3px;
  padding: 5px 0 7px;
  background: #373737;
`;
const ShelfMain = styled.div`
  flex: 1;
  min-width: 0;
  overflow: hidden;
`;
const ShelfTabs = styled.div`
  display: flex;
  gap: 3px;
  height: 19px;
  padding: 3px 0 0 1px;
  background: #373737;
`;
const Tab = styled.button<{ $on?: boolean }>`
  flex: none;
  height: 16px;
  padding: 0 10px;
  line-height: 14px;
  white-space: nowrap;
  border: 1px solid ${(p) => (p.$on ? D : "#2c2c2c")};
  border-bottom: 0;
  border-radius: 3px 3px 0 0;
  background: ${(p) => (p.$on ? D : "#393939")};
  color: ${(p) => (p.$on ? "#fff" : "#8f8f8f")};
`;
const ShelfRow = styled.div`
  display: flex;
  align-items: center;
  height: 42px;
  padding-left: 5px;
`;
const ShelfScroll = styled.div`
  display: flex;
  width: 12px;
  height: 36px;
  margin: 0 5px 0 auto;
  background: #373737;
`;

/* ---------- middle ---------- */
const Middle = styled.main`
  display: flex;
  box-sizing: content-box;
  height: 444px;
  border-bottom: 2px solid #373737;
`;
const Toolbox = styled.aside`
  display: flex;
  flex-direction: column;
  align-items: center;
  gap: 1px;
  width: 46px;
  padding-top: 3px;
  border-right: 2px solid #373737;
`;
const ToolGrip = styled.div`
  width: 38px;
  height: 4px;
  margin-bottom: 4px;
  border: 1px dotted #7a7a7a;
  border-width: 1px 0;
`;
const ToolFoot = styled.div`
  display: flex;
  flex-direction: column;
  align-items: center;
  gap: 8px;
  width: 36px;
  margin-top: auto;
  padding: 10px 0 5px;
  border-top: 2px solid #999;
`;
const Center = styled.section`
  flex: 1;
  min-width: 0;
  display: flex;
  flex-direction: column;
  padding: 3px 4px 3px 4px;
`;
const Views = styled.div`
  display: flex;
`;
const VSplit = styled.div`
  display: flex;
  align-items: center;
  justify-content: center;
  width: 7px;
  &::after { content: ""; height: 70px; border-left: 1px dotted #999; }
`;
const HSplit = styled.div<{ $w: number; $h: number }>`
  display: flex;
  align-items: center;
  justify-content: center;
  height: ${(p) => p.$h}px;
  &::after { content: ""; width: ${(p) => p.$w}px; border-top: 1px dotted #999; }
`;
const View = styled.div`
  flex: 1;
  min-width: 0;
  overflow: hidden;
`;
const Canvas = styled.svg`
  display: block;
  width: 100%;
  height: 176px;
  background: #5b5b5b;
`;

const axisText = { fontSize: 10, fontWeight: 700, fontFamily: "Noto Sans, sans-serif" };

const Viewport = ({ children }: { children: ReactNode }) => (
  <View>
    <Menu items="View|Shading|Lighting|Show|Renderer|Panels" gap={16} />
    <Bar $h={19}>
      <Sep w={11} />
      <Tools w={19} h={19} names={["vCam", "vLock", "vCamGear", "vMark", "vPlane", "vPan", "vPaint"]} />
      <Sep w={11} />
      <Tools w={19} h={19} on={["vGrid"]} names={["vGrid", "vFilm", "vRes", "vMask", "vField", "vSafe", "vT"]} />
      <Sep w={11} />
      <Tools w={19} h={19} on={["vShade"]} names={["vWire", "vShade", "vHalf", "vWireS", "vCheck", "vLight", "vShadow"]} />
      <Sep w={11} />
      <Tools w={19} h={19} names={["vAo", "vBlur", "vAA", "vDim"]} />
    </Bar>
    <Canvas viewBox="0 0 512 176" preserveAspectRatio="xMidYMid slice">{children}</Canvas>
  </View>
);

const TopView = () => (
  <>
    {Array.from({ length: 29 }, (_, i) => <path key={i} d={`M${17.5 + 17 * i} 0V176`} stroke="#3f3f3f" strokeWidth={i === 14 ? 2 : 1} />)}
    {Array.from({ length: 11 }, (_, i) => <path key={i} d={`M0 ${3.500 + 17 * i}H512`} stroke="#3f3f3f" strokeWidth={i === 5 ? 2 : 1} />)}
    <circle cx={256} cy={88.5} r={17.5} fill="#3fffa0" />
    {[5, 8, 11].map((q) => <circle key={q} cx={256} cy={88.5} r={q} fill="none" stroke="#6f9a8a" strokeDasharray="1 1" />)}
    {s("M244 77L268 100M268 77L244 100M243 84.500H269M243 92.500H269M250.500 75V102M261.500 75V102", "#6fb3a0", 1, "1 2")}
    {s("M276 88.500H346", "#e00000")}
    {f("M346 84L366 88.500L346 93Z", "#f00")}
    {s("M255.500 108V176", "#00007a")}
    <rect x={315.500} y={148.500} width={16} height={16} fill="rgba(60,200,60,.6)" stroke="#2fe02f" />
    {s("M25.500 151.500H40", "#e00")}
    {s("M25.500 151V160", "#00c")}
    <text x={23} y={150} fill="#0d0" {...axisText}>y</text>
    <text x={38} y={150} fill="#e00" {...axisText}>x</text>
    <text x={23} y={166} fill="#00d" {...axisText}>z</text>
    <text x={235} y={168} fill="#fff" {...axisText}>top -Y</text>
  </>
);

const project = (a: number, b: number) => {
  const u = a - b, v = a + b, w = 1 - 0.196 * v;
  return `${(256 + (94.5 * u) / w).toFixed(1)} ${(88.5 + (46.300 * v) / w).toFixed(1)}`;
};
const PerspView = () => (
  <>
    {Array.from({ length: 25 }, (_, i) => {
      const t = (i - 12) / 12;
      return <path key={i} d={`M${project(t, -1)}L${project(t, 1)}M${project(-1, t)}L${project(1, t)}`} stroke="#3f3f3f" strokeWidth={i === 12 ? 2 : 1} shapeRendering="crispEdges" />;
    })}
    <path d="M193 41L207 35L208 52L194 56Z" fill="rgba(230,60,60,.6)" stroke="#e02828" />
    <path d="M305 33L320 38V55L304 50Z" fill="rgba(60,60,190,.6)" stroke="#3030dd" />
    {s("M255.500 2V70", "#ff0")}{r(251, 0, 10, 3, "#ff0")}
    {s("M242 95L188 120", "#00e", 1.2)}{f("M163 132L181 116Q189 118 188 127Z", "#00f")}
    {s("M270 95L325 121", "#f00", 1.2)}{f("M348 131L324 127Q323 116 330 116Z", "#f00")}
    <circle cx={256} cy={88.500} r={11.500} fill="#3fffa0" />
    {s("M249 84.500H263M248 87.500H264M249 90.500H263M250 93.500H262", "#7aa08f", 1, "1 1")}
    {s("M248 97H252L256 100L260 97H264", "#224a38", 2)}
    <rect x={245.500} y={78.500} width={20} height={20} fill="none" stroke="#63c8f0" />
    <path d="M242 142L256 135L270 142L256 150Z" fill="rgba(70,190,70,.6)" stroke="#2fe02f" />
    {s("M25.500 137V151", "#0e0")}{s("M25 151L18 155", "#00d")}{s("M25 151L33 155", "#e00")}
    <text x={23} y={136} fill="#0d0" {...axisText}>y</text>
    <text x={12} y={156} fill="#00d" {...axisText}>z</text>
    <text x={33} y={156} fill="#e00" {...axisText}>x</text>
    <text x={235} y={168} fill="#fff" {...axisText}>persp</text>
  </>
);

/* ---------- graph editor ---------- */
const Editor = styled.div`
  position: relative;
  margin-left: 4px;
  margin-right: -1px;
  border: 1px solid #7e7e7e;
  padding-bottom: 1px;
`;
const EditorGrip = styled.div<{ $out?: boolean }>`
  position: absolute;
  left: ${(p) => (p.$out ? -4 : 4)}px;
  top: ${(p) => (p.$out ? 71 : 102)}px;
  height: ${(p) => (p.$out ? 70 : 56)}px;
  border-left: 1px dotted #888;
`;
const EditorTools = styled(Bar)`
  padding: 1px 0 0 1px;
`;
const Stats = styled.label`
  display: flex;
  align-items: center;
  justify-content: space-between;
  width: 122px;
  padding-left: 1px;
`;
const Pink = styled.span`
  display: flex;
  margin: 0 6px;
`;
const Graph = styled.div`
  margin-left: 8px;
  height: 168px;
  overflow: hidden;
  background: #383838;
`;
const Tip = styled.div`
  position: absolute;
  left: 816px;
  top: 53px;
  height: 18px;
  padding: 0 2px;
  border: 1px solid #000;
  background: #ffffe1;
  color: #000;
  line-height: 16px;
  white-space: nowrap;
  box-shadow: 3px 3px 3px rgba(0, 0, 0, 0.6);
`;

const gx = (frameNo: number) => 77.3 + 7.125 * frameNo;
const GraphChart = () => (
  <svg width={1018} height={168} display="block">
    {[48, 72, 96, 120, 168].map((y) => <path key={y} d={`M0 ${y}.5H1018`} stroke="#474747" />)}
    <path d="M0 144.500H1018" stroke="#6e6e6e" />
    {[0, 24, 48, 72, 96, 120].map((q) => <path key={q} d={`M${Math.round(gx(q))}.5 24V168`} stroke="#505050" />)}
    <rect width={1018} height={24} fill="#323232" />
    {Array.from({ length: 142 }, (_, i) => i - 10).map((q) => {
      const x = Math.round(gx(q)) - 1;
      return <rect key={q} x={x} y={q % 5 === 0 ? 0 : 17} width={1} height={q % 5 === 0 ? 24 : 7} fill={q % 5 === 0 ? "#6c6c6c" : "#606060"} />;
    })}
    {Array.from({ length: 29 }, (_, i) => (i - 2) * 5).filter((q) => q !== 0 && q <= 130 && q !== 120).map((q) => (
      <text key={q} x={gx(q) + 2} y={9} fontSize={9} fill="#999">{q}</text>
    ))}
    {r(0, 0, 84, 168, "rgba(31,31,31,.55)")}
    {r(933, 0, 85, 168, "rgba(31,31,31,.55)")}
    {f("M73 0H84V24L73 13Z", "#000")}
    {r(933, 0, 18, 14, "#000")}
    <text x={75} y={9} fontSize={10} fill="#fff" fontWeight={700}>1</text>
    <text x={936} y={9} fontSize={9} fill="#fff" fontWeight={700}>120</text>
    {["1", "0.75", "0.5", "0.25", "0", "-0.25"].map((t, i) => (
      <text key={t} x={36} y={44 + i * 24} fontSize={10} fontWeight={600} fill="#666" textAnchor="end">{t}</text>
    ))}
    {s("M84.500 49V97", "#5b80bf")}{s("M84.500 97V144", "#2fa457")}
    {s("M84 96.500H689L652 25", "#2fa457")}
    {s("M270 144L689 96.500", "#2fa457")}
    {s("M270 49L689 96.500", "#5b80bf")}
    {[48.5, 144.5].map((y) => (
      <g key={y}>
        {s(`M200 ${y}H340`, "#8a8a8a", 1, "4 4")}
        {s(`M195 ${y - 3}L200 ${y}L195 ${y + 3}ZM345 ${y - 3}L340 ${y}L345 ${y + 3}Z`, "#8a8a8a")}
        <path d={`M266 ${y}L270 ${y - 4}L274 ${y}L270 ${y + 4}Z`} fill="#383838" stroke="#fff" strokeWidth={1.500} />
        <path d={`M81 ${y}L85 ${y - 4}L89 ${y}L85 ${y + 4}Z`} fill="none" stroke="#e0922b" strokeWidth={1.500} />
      </g>
    ))}
  </svg>
);

/* ---------- channel box ---------- */
const Side = styled.aside`
  flex: none;
  display: flex;
  flex-direction: column;
  width: 265px;
  border-left: 2px solid #373737;
  padding: 0 4px;
`;
const SideIcons = styled.div`
  display: flex;
  justify-content: flex-end;
  height: 23px;
`;
const ChannelArea = styled.div`
  display: flex;
`;
const ChannelList = styled.div`
  flex: 1;
  padding: 2px 0 0 1px;
`;
const Node = styled.h2<{ $indent?: boolean; $hl?: boolean }>`
  height: 16px;
  margin: 0 1px 0 0;
  padding-left: ${(p) => (p.$indent ? 10 : 1)}px;
  font: 700 11px/16px "Noto Sans", sans-serif;
  color: #bdbdbd;
  background: ${(p) => (p.$hl ? "#373737" : "transparent")};
`;
const Channel = styled.label`
  display: flex;
  justify-content: flex-end;
  height: 16px;
  padding-right: 1px;
`;
const ChannelName = styled.span`
  padding-right: 7px;
  line-height: 16px;
`;
const ChannelField = styled.input`
  width: 74px;
  height: 15px;
  padding: 0 0 1px 2px;
  border-left: 7px solid #dd727a;
  background: #2b2b2b;
  color: #ddd;
`;
const VScroll = styled.div`
  display: flex;
  flex-direction: column;
  align-items: center;
  gap: 4px;
  width: 12px;
  height: 241px;
  padding: 4px 1px;
  background: #373737;
  &::before { content: ""; border: 5px solid transparent; border-bottom-color: ${G}; border-top: 0; }
  &::after { content: ""; margin-top: auto; border: 5px solid transparent; border-top-color: ${G}; border-bottom: 0; }
`;
const Thumb = styled.div<{ $h?: boolean }>`
  ${(p) => p.$h ? css`width: 154px; height: 10px;` : css`width: 10px; height: 200px;`}
  border-radius: 5px;
  background: #5d5d5d;
`;
const LayerBox = styled.div`
  height: 144px;
  margin-top: 6px;
  border: 1px solid #373737;
`;
const LayerTabs = styled(ShelfTabs)`
  height: 18px;
  padding-top: 2px;
  padding-left: 0;
`;
const LayerIcons = styled.div`
  display: flex;
  justify-content: flex-end;
  align-items: center;
  height: 22px;
  padding-right: 3px;
`;
const LayerList = styled.div`
  display: flex;
  flex-direction: column;
  justify-content: flex-end;
  height: 75px;
  margin: 4px 4px 0 3px;
  background: #2b2b2b;
`;
const HScroll = styled.div`
  display: flex;
  align-items: center;
  gap: 5px;
  height: 12px;
  padding: 0 4px 0 3px;
  background: #373737;
  &::before { content: ""; border: 5px solid transparent; border-right-color: ${G}; border-left: 0; }
  &::after { content: ""; margin-left: auto; border: 5px solid transparent; border-left-color: ${G}; border-right: 0; }
`;
const VTabs = styled.div`
  flex: none;
  display: flex;
  flex-direction: column;
  gap: 2px;
  width: 16px;
  padding-top: 2px;
  background: #373737;
`;
const VTab = styled.button<{ $h: number; $on?: boolean }>`
  height: ${(p) => p.$h}px;
  width: 16px;
  writing-mode: vertical-rl;
  text-align: center;
  white-space: nowrap;
  line-height: 16px;
  border: 1px solid ${(p) => (p.$on ? D : "#2b2b2b")};
  border-left: 0;
  border-radius: 0 3px 3px 0;
  background: ${(p) => (p.$on ? D : "#3a3a3a")};
  color: ${(p) => (p.$on ? "#eee" : "#8f8f8f")};
`;

/* ---------- bottom ---------- */
const Timeline = styled.div`
  flex: 1;
  min-width: 0;
  height: 28px;
  margin-right: 7px;
  overflow: hidden;
  background: #2b2b2b;
`;
const Transport = styled.div`
  display: flex;
  padding: 0 10px 0 6px;
`;
const Range = styled.div`
  flex: 1;
  height: 25px;
  margin: 0 7px;
  padding: 2px 3px;
  background: #373737;
`;
const RangeThumb = styled.div`
  display: flex;
  align-items: center;
  width: 287px;
  height: 21px;
  padding: 0 4px;
  border-radius: 4px;
  background: #5d5d5d;
`;
const Knob = styled.span`
  width: 14px;
  height: 14px;
  border-radius: 3px;
  background: #8d8d8d;
`;
const RangeText = styled.span`
  flex: 1;
  display: flex;
  justify-content: space-between;
  padding: 0 4px;
`;
const RangeBar = styled(RuledBar)`
  padding-right: 8px;
`;
const FieldPair = styled.div`
  display: flex;
  gap: 8px;
`;
const CommandBar = styled(RuledBar)`
  padding-right: 3px;
`;
const Mel = styled.label`
  width: 45px;
  padding-left: 10px;
  color: #eee;
`;
const MelField = styled(Field)`
  flex: 4;
`;
const Result = styled.output`
  flex: 7;
  height: 23px;
  padding-left: 5px;
  background: #2b2b2b;
  line-height: 23px;
`;
const CmdGrip = styled.span`
  width: 4px;
  height: 9px;
  margin-left: 4px;
  border-left: 1px dotted #888;
`;
const Help = styled.div`
  height: 24px;
  display: flex;
  align-items: center;
  font-size: 9px;
  color: #b8b8b8;
`;
const HelpText = styled.p`
  margin: 0;
  padding-left: 6px;
`;

/* ---------- task bar ---------- */
const Taskbar = styled.footer`
  display: flex;
  align-items: center;
  height: 40px;
  background: linear-gradient(90deg, #2a2320, #2c2623 50%, #242321 62%, #222220 74%, #3c2f29 80%, #38302b);
  color: #fff;
`;
const Search = styled.label`
  display: flex;
  align-items: center;
  gap: 11px;
  width: 344px;
  height: 40px;
  padding-left: 11px;
  border: 1px solid #bbb;
  background: #f1f1f1;
`;
const SearchInput = styled.input`
  flex: 1;
  font-size: 13px;
  color: #333;
  &::placeholder { color: #333; opacity: 1; }
`;
const Task = styled.button<{ $run?: boolean; $active?: boolean }>`
  display: flex;
  align-items: center;
  justify-content: center;
  width: 45px;
  height: 40px;
  margin: 0 2px;
  border-bottom: 2px solid ${(p) => (p.$run ? "#5d9dbd" : "transparent")};
  background: ${(p) => (p.$active ? "#595552" : "transparent")};
`;
const StartBtn = styled(Task)`
  width: 48px;
  margin: 0;
`;
const Tray = styled.div`
  display: flex;
  align-items: center;
  gap: 11px;
  margin-left: auto;
  padding-right: 4px;
`;
const Clock = styled.time`
  padding: 0 3px;
  text-align: center;
  line-height: 18px;
`;
const Notice = styled.button`
  width: 40px;
  height: 40px;
  padding: 3px 0 0 3px;
  text-align: left;
  border-right: 1px solid #8a807a;
`;

const MayaMark = ({ w, h }: { w: number; h: number }) => (
  <svg width={w} height={h} viewBox="0 0 32 30" preserveAspectRatio="none" aria-hidden="true">
    <path d="M0 0H6V29H0Z" fill="#0c8f93" />
    <path d="M26 0H32V29H22V14Z" fill="#0c8f93" />
    <path d="M0 22L6 12V29H0Z" fill="#12a9ad" />
    <path d="M27 8L32 29H26Z" fill="#15b9bb" />
    <path d="M32 0H23L14 24L18 29H20Z" fill="#27b5b7" />
    <path d="M32 0L27 14L22 26Z" fill="#0a7f84" />
    <path d="M0 0H9L18 18L20 29H15Z" fill="#8cc9cd" />
    <path d="M9 0L18 18L16 24Z" fill="#5fa9b0" />
  </svg>
);

const channels: [string, string][] = [
  ["Translate X", "0"], ["Translate Y", "0"], ["Translate Z", "0"],
  ["Rotate X", "0"], ["Rotate Y", "0"], ["Rotate Z", "0"],
  ["Scale X", "1"], ["Scale Y", "1"], ["Scale Z", "1"], ["Visibility", "on"],
];
const shelfTabs = ["Curves / Surfaces", "Poly Modeling", "Sculpting", "Rigging", "Animation", "Rendering", "FX", "FX Caching", "Custom", "Arnold", "MASH", "Motion Graphics", "XGen"];
const shelfGroups = [
  ["sphere", "cube", "cylinder", "cone", "torus", "plane", "disc"],
  ["platonic"],
  ["star", "type", "svg"],
  ["center", "history", "freeze"],
  ["combine", "separate", "mirror", "smooth", "reduce", "extrude", "bridge", "bevel", "connect", "wheel", "fill", "merge", "target", "remesh"],
  ["cut", "loop", "quad"],
  ["uv1", "uv2", "uv3", "uv4", "uv5"],
];

const LayoutTile = ({ x, y, solid }: { x: number; y: number; solid?: boolean }) => (
  <>
    <rect x={x + 0.5} y={y + 0.5} width={12} height={12} fill={solid ? G : "none"} stroke={G} />
    {solid ? <path d={`M${x + 2} ${y + 6}L${x + 6} ${y + 3}L${x + 11} ${y + 6}L${x + 6} ${y + 9}Z`} fill="#333" /> : <path d={`M${x + 3} ${y + 6.5}h7M${x + 6.5} ${y + 3}v7`} stroke={G} />}
  </>
);

export default function App() {
  return (
    <Page>
      <Global />
      <Win>
        <TitleBar>
          <svg width={18} height={23} aria-hidden="true">
            <rect x={3} y={3} width={14} height={16} fill="#dff0f0" />
            <path d="M4 4H7L10 11L13 4H16V14H13V9L10 15L7 9V14H4Z" fill="#1a8a93" />
            <path d="M8 17.500H16" stroke="#7fc4c9" strokeDasharray="2 1" />
          </svg>
          <Title>{"Autodesk Maya 2018: untitled*   ---    pSphere1..."}</Title>
          <ToolBtn $w={46} $h={22} aria-label="Minimize"><svg width={12} height={12}><path d="M1 6.500H11" stroke="#000" /></svg></ToolBtn>
          <ToolBtn $w={45} $h={22} aria-label="Restore"><svg width={12} height={12}><path d="M1.500 3.500H8.500V10.500H1.500ZM3.500 3V1.500H10.500V8.500H9" fill="none" stroke="#000" /></svg></ToolBtn>
          <ToolBtn $w={48} $h={22} aria-label="Close"><svg width={12} height={12}><path d="M1 1L11 11M11 1L1 11" stroke="#000" /></svg></ToolBtn>
        </TitleBar>

        <TopBar>
          <Menu pl={9} items="File|Edit|Create|Select|Modify|Display|Windows|Mesh|Edit Mesh|Mesh Tools|Mesh Display|Curves|Surfaces|Deform|UV|Generate|Cache|Arnold|Help" />
          <Workspace>
            <span>Workspace :</span>
            <Drop w={192} h={19} value="Maya Classic" label="Workspace" />
            <svg width={14} height={18} aria-label="Locked"><path d="M3.500 9V5Q3.500 2 7 2Q10.500 2 10.500 5V9" fill="none" stroke={G} strokeWidth={2} /><rect x={1} y={8} width={12} height={8} fill={G} /><rect x={6} y={10} width={2} height={4} fill={D} /></svg>
          </Workspace>
        </TopBar>

        <RuledBar $h={28}>
          <Grip />
          <Drop w={98} h={20} value="Modeling" label="Menu set" />
          <Sep w={23} />
          <Tools w={23} h={22} names={["new", "open", "save", "undo", "redo"]} />
          <Sep w={22} kind="arrow" /><Sep w={22} />
          <Tools w={23} h={22} on={["selObj"]} names={["selHier", "selObj", "selComp"]} />
          <Sep w={22} kind="arrow" /><Sep w={23} />
          <Tools w={23} h={22} names={["magGrid", "magCurve", "magPoint", "magCenter", "magPlane", "mag"]} />
          <ListArrow w={18} label="Live surface list" />
          <Outline $w={100}>No Live Surface</Outline>
          <Sep w={22} />
          <ListArrow w={20} label="Symmetry list" />
          <Outline $w={100}>Symmetry: Off</Outline>
          <Sep w={23} kind="arrow" /><Sep w={23} />
          <Tools w={23} h={22} names={["rEye", "rClap", "rIpr", "rGear", "rBall", "rLayer", "rPaint", "pause"]} />
          <Sep w={22} kind="arrow" /><Sep w={22} />
          <SignIn>
            <svg width={16} height={16} aria-hidden="true"><circle cx={8} cy={5} r={4} fill="#fff" /><path d="M6 7H10V10L15 13V15H1V13L6 10Z" fill="#fff" /></svg>
            Sign In
            <Push><svg width={10} height={10}><path d="M0 3H10L5 8Z" fill={G} /></svg></Push>
          </SignIn>
          <Push>
            <Tools w={23} h={22} on={["pLayers"]} names={["pModel", "pHuman", "pAttr", "pTool", "pLayers"]} />
          </Push>
        </RuledBar>

        <Shelf>
          <Grip />
          <ShelfSide>
            <ToolBtn $w={20} $h={20} aria-label="Shelf menu"><Icon n="panelMenu" w={20} h={20} /></ToolBtn>
            <ToolBtn $w={20} $h={20} aria-label="Shelf options"><Icon n="gear" w={20} h={20} /></ToolBtn>
          </ShelfSide>
          <ShelfMain>
            <ShelfTabs>{shelfTabs.map((t) => <Tab key={t} $on={t === "Poly Modeling"}>{t}</Tab>)}</ShelfTabs>
            <ShelfRow>
              {shelfGroups.map((g, i) => (
                <React.Fragment key={g[0]}>
                  {i > 0 && <Sep w={12} kind="tall" />}
                  <Tools w={34} h={34} size={28} names={g} />
                </React.Fragment>
              ))}
              <ShelfScroll>
                <svg width={12} height={36} aria-hidden="true"><path d="M1 8L6 3L11 8ZM1 28H11L6 33Z" fill={G} /><circle cx={6} cy={18} r={5} fill="#5d5d5d" /></svg>
              </ShelfScroll>
            </ShelfRow>
          </ShelfMain>
        </Shelf>

        <Middle>
          <Toolbox>
            <ToolGrip />
            <Tools w={36} h={36} size={32} on={["tMove"]} names={["tSel", "tLasso", "tPaint", "tMove", "tRot", "tScale"]} />
            <ToolFoot>
              <ToolBtn $w={28} $h={28} aria-label="Single view">
                <svg width={28} height={28}><rect width={28} height={28} fill={G} /><rect x={2.500} y={2.500} width={23} height={23} fill="none" stroke="#333" /><path d="M14 7L18 10L14 13L10 10ZM14 15L18 18L14 21L10 18ZM9 11L13 14L9 17L5 14ZM19 11L23 14L19 17L15 14Z" fill="#333" /></svg>
              </ToolBtn>
              <ToolBtn $w={28} $h={28} aria-label="Four views">
                <svg width={28} height={28}><LayoutTile x={0} y={0} /><LayoutTile x={15} y={0} solid /><LayoutTile x={0} y={15} /><LayoutTile x={15} y={15} /></svg>
              </ToolBtn>
              <svg width={28} height={7}><path d="M.5 7V.5H12.500V7" fill="none" stroke={G} /><rect x={15} width={13} height={7} fill={G} /></svg>
              <MayaMark w={32} h={30} />
            </ToolFoot>
          </Toolbox>

          <Center>
            <Views>
              <Viewport><TopView /></Viewport>
              <VSplit />
              <Viewport><PerspView /></Viewport>
            </Views>
            <HSplit $w={344} $h={6} />
            <Editor>
              <EditorGrip $out />
              <EditorGrip />
              <Menu items="Edit|View|Select|Curves|Keys|Tangents|List|Show|Panels" h={18} />
              <EditorTools $h={28}>
                <Tools w={25} h={25} names={["g1", "g2", "g3", "g4", "g5"]} />
                <Sep w={4} kind="line" />
                <Stats>Stats<Field $w={88} $h={19} defaultValue="27" aria-label="Frame" /></Stats>
                <Pink><Field $w={93} $h={19} $bg="#b993bb" $fg="#7a4d5c" defaultValue="1" aria-label="Value" /></Pink>
                <Sep w={4} kind="line" />
                <Tools w={25} h={25} names={["g6", "g7", "g8"]} />
                <Sep w={4} kind="line" />
                <Tools w={25} h={25} names={["g9", "g10", "g11", "g12", "g13", "g14", "g15"]} />
                <Sep w={4} kind="line" />
                <Tools w={25} h={25} names={["g16", "g17"]} />
                <Sep w={4} kind="line" />
                <Tools w={25} h={25} on={["g18", "g20"]} names={["g18", "g19", "g20", "g21"]} />
                <Sep w={4} kind="line" />
                <Tools w={25} h={25} on={["g22"]} names={["g22", "g23"]} />
                <Sep w={4} kind="line" />
                <Tools w={25} h={25} on={["g24"]} names={["g24", "g25"]} />
                <Sep w={4} kind="line" />
                <Tools w={25} h={25} names={["g26"]} />
                <Tools w={21} h={25} names={["g27", "g28"]} />
                <Tools w={25} h={25} names={["g29", "g30", "g31"]} />
              </EditorTools>
              <Graph><GraphChart /></Graph>
              <Tip role="tooltip">Load Graph Editor from selection</Tip>
            </Editor>
          </Center>

          <Side>
            <SideIcons><Tools w={21} h={23} names={["cTri", "cSpeed", "cGraph"]} /></SideIcons>
            <Menu items="Channels|Edit|Object|Show" />
            <ChannelArea>
              <ChannelList>
                <Node>pSphere1</Node>
                {channels.map(([name, value]) => (
                  <Channel key={name}><ChannelName>{name}</ChannelName><ChannelField defaultValue={value} /></Channel>
                ))}
                <Node>SHAPES</Node>
                <Node $indent $hl>pSphereShape1</Node>
                <Node>INPUTS</Node>
                <Node $indent>polySphere1</Node>
              </ChannelList>
              <VScroll><Thumb /></VScroll>
            </ChannelArea>
            <HSplit $w={86} $h={6} />
            <LayerBox>
              <LayerTabs><Tab $on>Display</Tab><Tab>Anim</Tab></LayerTabs>
              <Menu items="Layers|Options|Help" pl={9} />
              <LayerIcons><Tools w={25} h={20} names={["lUp", "lDown", "lNew", "lAssign"]} /></LayerIcons>
              <LayerList><HScroll><Thumb $h /></HScroll></LayerList>
            </LayerBox>
          </Side>
          <VTabs>
            <VTab $h={155} $on>Channel Box / Layer Editor</VTab>
            <VTab $h={110}>Modeling Toolkit</VTab>
            <VTab $h={100}>Attribute Editor</VTab>
          </VTabs>
        </Middle>

        <RuledBar $h={36}>
          <Grip />
          <Timeline>
            <svg width={1058} height={28} display="block">
              {Array.from({ length: 24 }, (_, i) => (i + 1) * 5).map((q) => {
                const x = Math.round(8.73 * q - 3.2);
                return <g key={q}><rect x={x} y={13} width={2} height={15} fill="#777" /><text x={x} y={9} fontSize={10} fill="#7a7a7a">{q}</text></g>;
              })}
              <rect x={4} width={2} height={28} fill="#e60000" />
              <rect x={231} width={1} height={28} fill="#e60000" />
            </svg>
          </Timeline>
          <Field $w={88} $h={18} defaultValue="-17" aria-label="Current time" />
          <Transport><Tools w={23} h={24} names={["start", "stepB", "keyB", "playB", "play", "keyF", "stepF", "end"]} /></Transport>
        </RuledBar>

        <RangeBar $h={35}>
          <Grip />
          <FieldPair>
            <Field $w={88} $h={25} defaultValue="1" aria-label="Animation start" />
            <Field $w={88} $h={25} defaultValue="1" aria-label="Playback start" />
          </FieldPair>
          <Range>
            <RangeThumb><Knob /><RangeText><span>1</span><span>120</span></RangeText><Knob /></RangeThumb>
          </Range>
          <FieldPair>
            <Field $w={88} $h={25} defaultValue="120" aria-label="Playback end" />
            <Field $w={88} $h={25} defaultValue="200" aria-label="Animation end" />
          </FieldPair>
          <Sep w={11} />
          <ListArrow w={27} label="Character set list" />
          <Outline $w={102}>No Character Set</Outline>
          <ListArrow w={27} label="Anim layer list" />
          <Outline $w={102}>No Anim Layer</Outline>
          <Sep w={23} />
          <Drop w={95} h={19} value="24 fps" label="Frame rate" />
          <Tools w={42} h={24} names={["repeat"]} />
          <Sep w={5} />
          <Tools w={37} h={24} names={["auto"]} />
          <Tools w={24} h={24} names={["run"]} />
        </RangeBar>

        <CommandBar $h={32}>
          <Grip />
          <Mel htmlFor="mel">MEL</Mel>
          <MelField id="mel" $h={21} />
          <CmdGrip />
          <Result>// Result: 9</Result>
          <Tools w={30} h={24} names={["script"]} />
        </CommandBar>

        <Help><Grip /><HelpText>Load Graph Editor from selection</HelpText></Help>

        <Taskbar>
          <StartBtn aria-label="Start"><svg width={16} height={16}><path d="M0 2L7 1V7H0ZM8 1L16 0V7H8ZM0 8H7V15L0 14ZM8 8H16V16L8 15Z" fill="#fff" /></svg></StartBtn>
          <Search>
            <svg width={17} height={18} aria-hidden="true"><circle cx={11} cy={6} r={5} fill="none" stroke="#222" /><path d="M7 10L1 17" stroke="#222" /></svg>
            <SearchInput placeholder="Escribe aquí para buscar" aria-label="Search" />
          </Search>
          <Task aria-label="Task view"><svg width={18} height={16}><path d="M1.500 0V2.500H12.500V0M1.500 16V13.500H12.500V16M1.500 4.500H12.500V11.500H1.500ZM16.500 0V16" fill="none" stroke="#fff" /><rect x={15} y={5} width={3} height={3} fill="#fff" /></svg></Task>
          <Task aria-label="Word">
            <svg width={24} height={24}><rect x={11} y={4} width={12} height={16} fill="#fff" stroke="#2b579a" /><path d="M14 7.500H21M14 10.500H21M14 13.500H21M14 16.500H21" stroke="#2b579a" /><path d="M1 3L14 1V23L1 21Z" fill="#2b579a" /><text x={7} y={16} fontSize={11} fontWeight={700} fill="#fff" textAnchor="middle">W</text></svg>
          </Task>
          <Task aria-label="Excel">
            <svg width={24} height={24}><rect x={11} y={4} width={12} height={16} fill="#fff" stroke="#217346" /><path d="M14 7.500H21M14 10.500H21M14 13.500H21M14 16.500H21M18 5V19" stroke="#217346" /><path d="M1 3L14 1V23L1 21Z" fill="#1e7145" /><text x={7} y={16} fontSize={12} fontWeight={700} fill="#fff" textAnchor="middle">X</text></svg>
          </Task>
          <Task $run aria-label="Firefox">
            <svg width={24} height={26}><circle cx={12} cy={14} r={11} fill="#ff5a26" /><path d="M3 7Q1 13 3 18Q7 25 14 24Q22 22 23 14Q23 7 17 1Q16 5 14 6Q8 4 3 7Z" fill="#ff8a1c" /><path d="M16 0Q24 7 23 14Q22 19 18 22Q20 10 13 6Q16 4 16 0Z" fill="#ffd43a" /><path d="M2 8L4 3L6 7L8 6L9 8L6 10Q6 18 12 20Q18 20 19 15Q20 22 13 25Q4 25 1 17Q0 12 2 8Z" fill="#ff4a45" /><circle cx={12} cy={14} r={5} fill="#7b3fd4" /><path d="M6 11Q9 8 13 11Q10 12 10 14Q7 14 6 11Z" fill="#ff9c27" /></svg>
          </Task>
          <Task $run $active aria-label="Maya">
            <svg width={24} height={24}><rect width={24} height={24} fill="#e4f4f4" /><path d="M3 2H8L12 10L16 2H21V16H17V9L13 17L8 9V16H3Z" fill="#138f99" /><path d="M3 2H8L15 15L13 17Z" fill="#4bb3bb" /><text x={16} y={23} fontSize={5} fontWeight={700} fill="#138f99" textAnchor="middle">MAYA</text></svg>
          </Task>
          <Tray>
            <svg width={12} height={8} aria-label="Show hidden icons"><path d="M1 7L6 1L11 7" fill="none" stroke="#fff" /></svg>
            <svg width={15} height={10} aria-label="Battery"><rect x={0.5} y={0.5} width={12} height={8} fill="none" stroke="#fff" /><rect x={2} y={2} width={4} height={5} fill="#fff" /><rect x={13} y={3} width={2} height={3} fill="#fff" /></svg>
            <svg width={14} height={14} aria-label="Wi-Fi"><path d="M1 12A11 11 0 0 1 12 1M4 13A8 8 0 0 1 12 5M7 13A5 5 0 0 1 12 8" fill="none" stroke="#eee" /><circle cx={11} cy={12} r={1.500} fill="#fff" /></svg>
            <span>ESP</span>
            <Clock>20:47<br />22/2/2020</Clock>
            <Notice aria-label="Notifications">
              <svg width={26} height={26}><path d="M0 2H16V14H8L5 17V14H0Z" fill="#fff" /><path d="M3 5.500H13M3 8.500H13M3 11.500H10" stroke="#333" /><circle cx={16} cy={17} r={8} fill="#3c3c3c" stroke="#888" /><text x={16} y={21} fontSize={11} fill="#fff" textAnchor="middle">8</text></svg>
            </Notice>
          </Tray>
        </Taskbar>
      </Win>
    </Page>
  );
}
